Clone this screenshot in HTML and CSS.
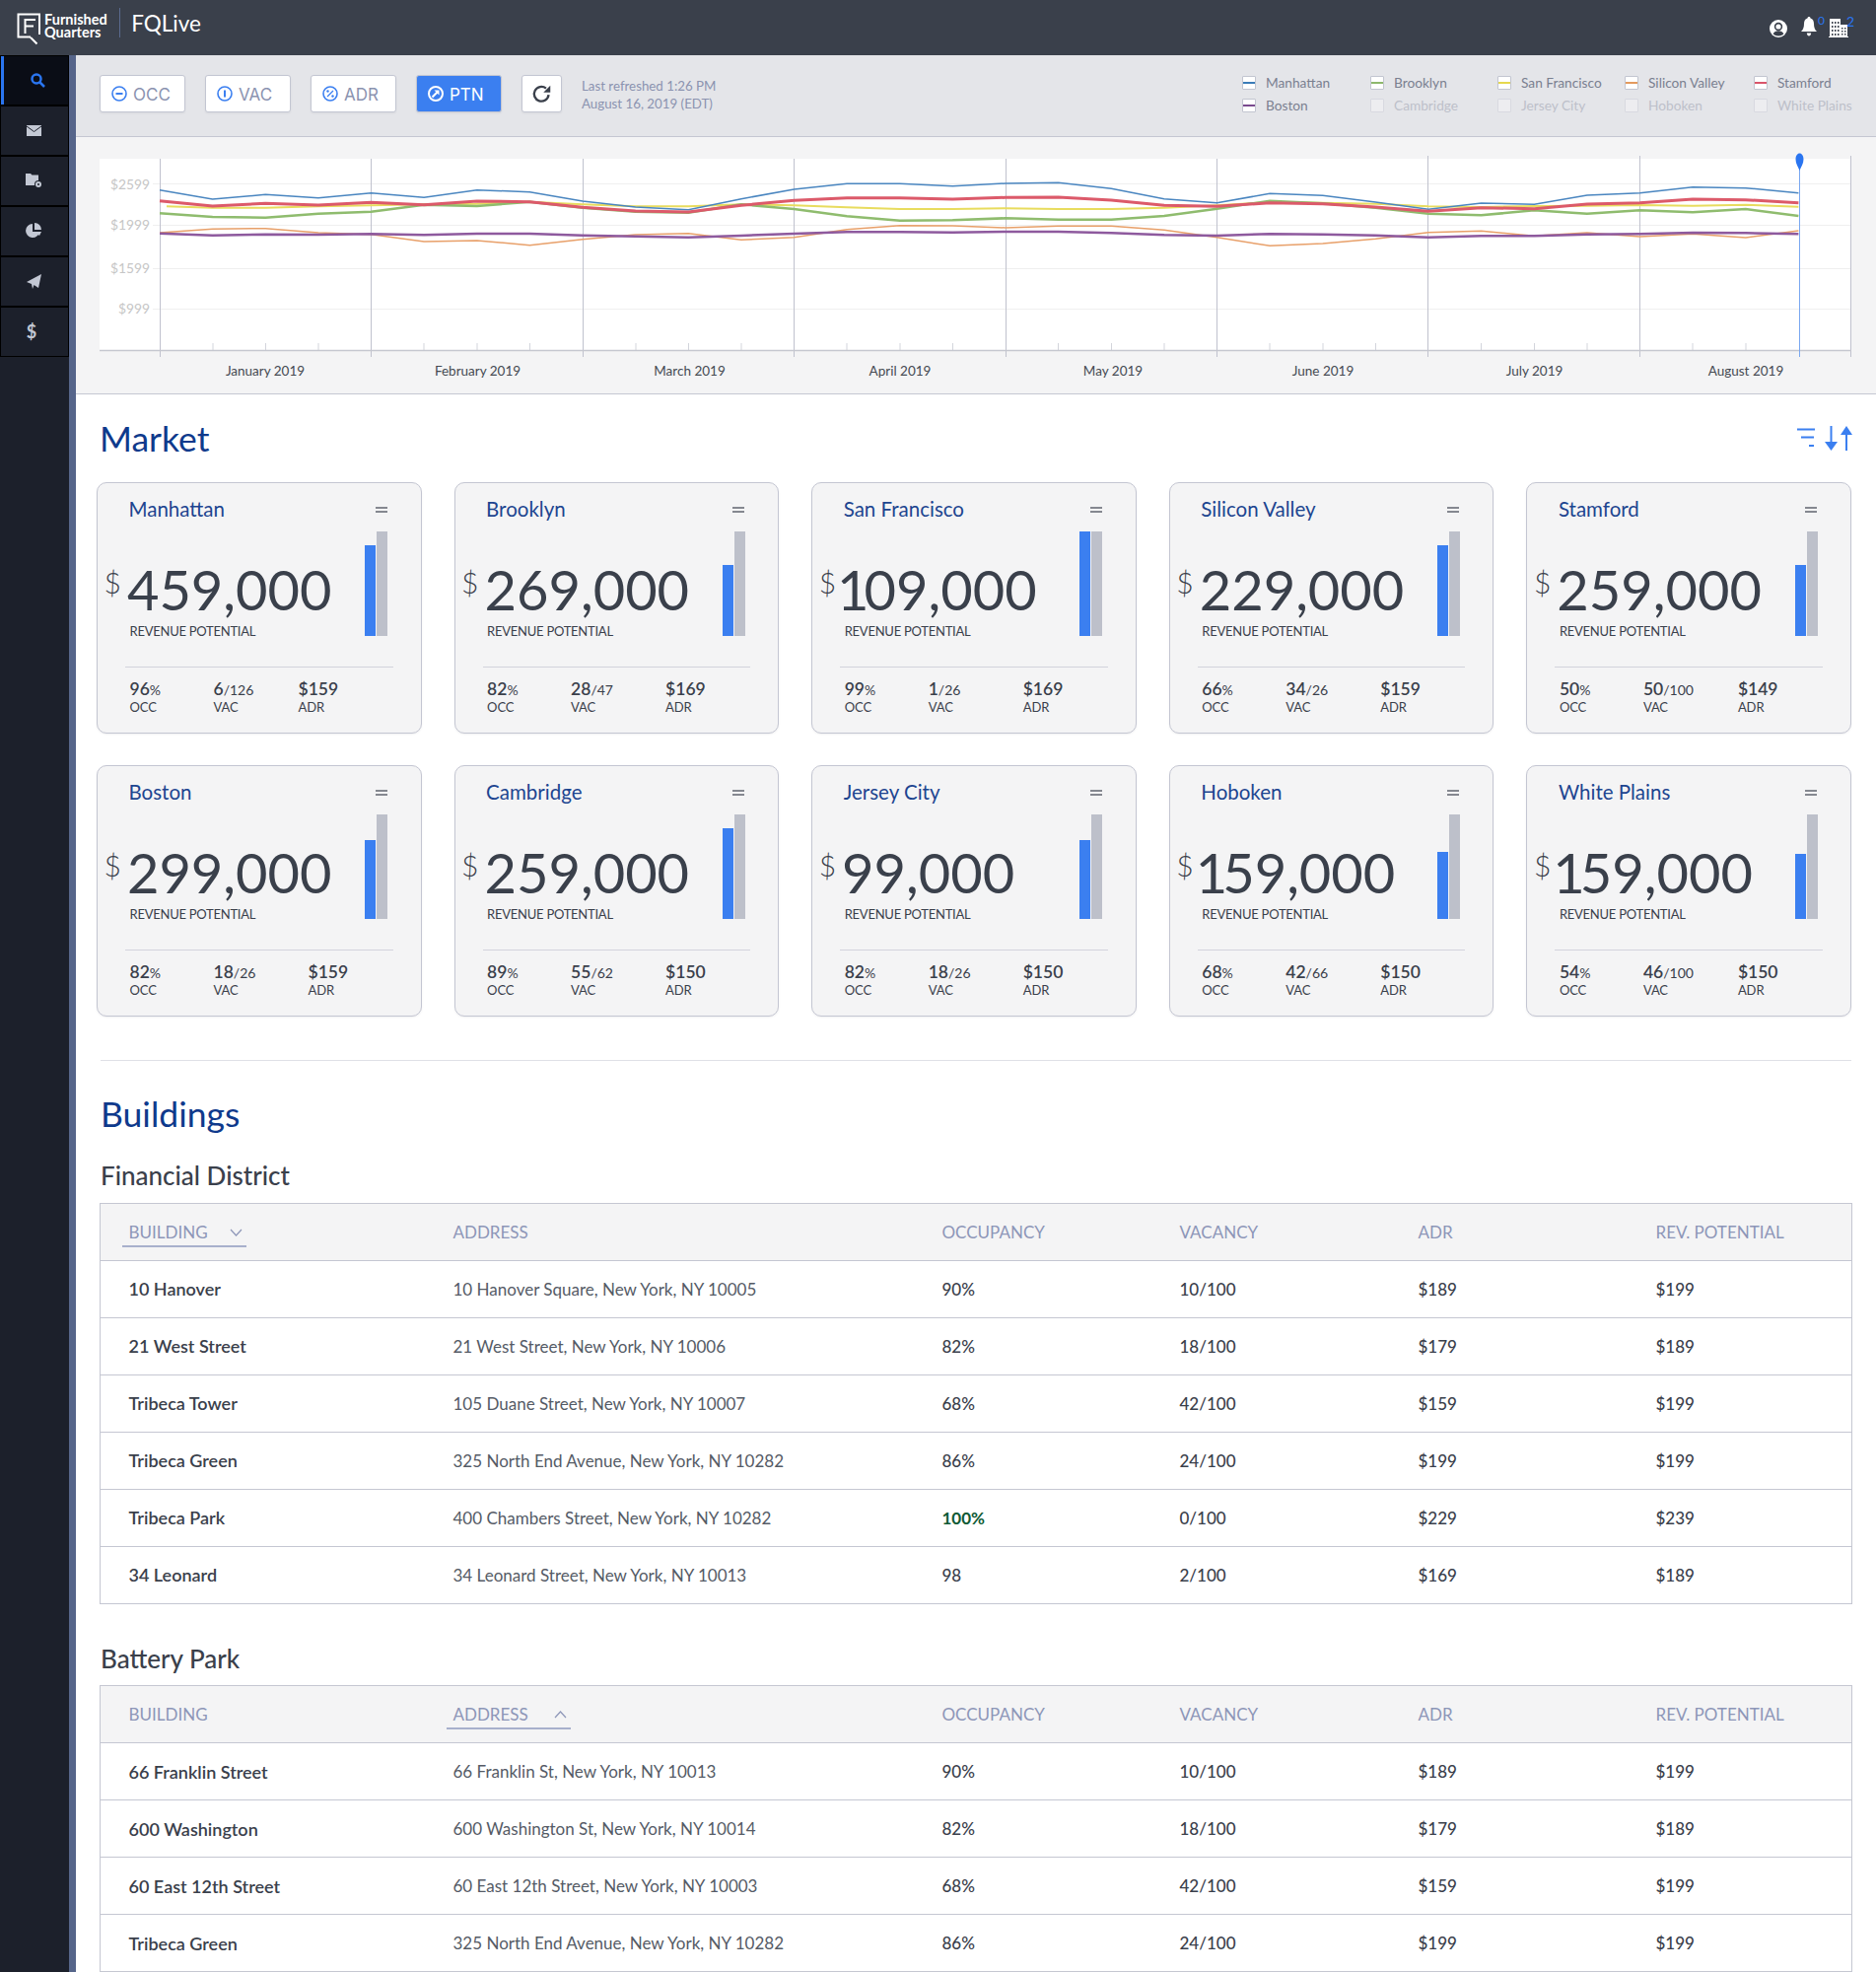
FILE: index.html
```html
<!DOCTYPE html>
<html lang="en">
<head>
<meta charset="utf-8">
<title>FQLive</title>
<link rel="stylesheet" href="styles.css">
</head>
<body>
<header class="topbar">
  <div class="brand">
    <svg class="logo-mark" width="24" height="34" viewBox="17 12 24 34"><path d="M40 35V14.500H18.500V37.500H31M25.500 34V20H36M25.500 26.500H34M31 38l6.500 6.500" fill="none" stroke="#fff" stroke-width="2"/></svg>
    <div class="logo-text"><span>Furnished</span><span>Quarters</span></div>
    <div class="brand-rule"></div>
    <div class="product">FQLive</div>
  </div>
  <div class="top-icons">
    <svg width="18" height="18" viewBox="0 0 18 18" class="ic-user"><circle cx="9" cy="9" r="9" fill="#fff"/><circle cx="9" cy="7" r="3.400" fill="#fff" stroke="#3a404b" stroke-width="1.600"/><path d="M3.600 14.600c1-2.600 3-3.400 5.400-3.400s4.400.8 5.400 3.400c-1.400 1.300-3.300 2-5.400 2s-4-.7-5.400-2z" fill="#3a404b"/></svg>
    <div class="badged"><svg width="16" height="20" viewBox="0 0 16 20"><path d="M8 0c1 0 1.500.7 1.500 1.500C12 2.200 13 4.500 13 7c0 3.500.8 6 3 8H0c2.200-2 3-4.500 3-8 0-2.500 1-4.800 3.500-5.500C6.500.7 7 0 8 0zM5.800 16.500h4.400C10 18.500 9 19.500 8 19.500s-2-1-2.200-3z" fill="#fff"/></svg><span class="badge">0</span></div>
    <div class="badged badged-b"><svg width="20" height="19" viewBox="0 0 20 19"><path d="M1 0h11v6h7v12h1v1H0v-1h1z" fill="#fff"/><path d="M3 3h1.500v2H3zM6 3h1.500v2H6zM9 3h1.500v2H9zM3 7h1.500v2H3zM6 7h1.500v2H6zM9 7h1.500v2H9zM3 11h1.500v2H3zM6 11h1.500v2H6zM9 11h1.500v2H9zM13 9h1.500v1.500H13zM16 9h1.500v1.500H16zM13 12h1.500v1.500H13zM16 12h1.500v1.500H16zM3 15h1.500v2H3zM6 15h1.500v2H6zM9 15h1.500v2H9zM13 15h1.500v1.500H13zM16 15h1.500v1.500H16z" fill="#3a404b"/></svg><span class="badge">2</span></div>
  </div>
</header>
<div class="shell">
  <nav class="sidebar">
    <a class="side-item side-active"><svg width="15" height="15" viewBox="0 0 15 15"><circle cx="6" cy="6" r="4.500" fill="none" stroke="#2a75f0" stroke-width="2.500"/><path d="M9.500 9.500l4.500 4.500" stroke="#2a75f0" stroke-width="2.500"/></svg></a>
    <a class="side-item"><svg width="15" height="11" viewBox="0 0 15 11"><path d="M0 0h15v11H0z" fill="#c3c8d4"/><path d="M0 1l7.500 5.500L15 1" fill="none" stroke="#1c202b" stroke-width="1"/></svg></a>
    <a class="side-item"><svg width="17" height="16" viewBox="0 0 17 16"><path d="M0 1h5l1.500 1.500H13V13H0z" fill="#c3c8d4"/><circle cx="13" cy="12" r="4" fill="#1c202b"/><circle cx="13" cy="12" r="3" fill="#c3c8d4"/><circle cx="13" cy="12" r="1" fill="#1c202b"/></svg></a>
    <a class="side-item"><svg width="16" height="16" viewBox="0 0 16 16"><path d="M7 1a7 7 0 1 0 7 8H7z" fill="#c3c8d4"/><path d="M9 0a7 7 0 0 1 7 7H9z" fill="#c3c8d4"/><path d="M9 9h7l-2 4z" fill="#c3c8d4"/></svg></a>
    <a class="side-item"><svg width="15" height="15" viewBox="0 0 15 15"><path d="M15 0L12 14 7.500 11 6 15 5 10 0 8z" fill="#c3c8d4"/></svg></a>
    <a class="side-item side-dollar">$</a>
  </nav>
  <main class="content">
    <section class="toolbar">
      <button class="tbtn"><svg width="16" height="16" viewBox="0 0 16 16"><circle cx="8" cy="8" r="7" fill="none" stroke="#3b7ff0" stroke-width="1.600"/><path d="M4.500 8h7" stroke="#3b7ff0" stroke-width="2"/></svg>OCC</button>
      <button class="tbtn"><svg width="16" height="16" viewBox="0 0 16 16"><circle cx="8" cy="8" r="7" fill="none" stroke="#3b7ff0" stroke-width="1.600"/><path d="M8 4.500v7" stroke="#3b7ff0" stroke-width="2"/></svg>VAC</button>
      <button class="tbtn"><svg width="16" height="16" viewBox="0 0 16 16"><circle cx="8" cy="8" r="7" fill="none" stroke="#3b7ff0" stroke-width="1.600"/><path d="M5 11l6-6" stroke="#3b7ff0" stroke-width="1.200"/><circle cx="5.500" cy="5.500" r="1.200" fill="#3b7ff0"/><circle cx="10.500" cy="10.500" r="1.200" fill="#3b7ff0"/></svg>ADR</button>
      <button class="tbtn tbtn-on"><svg width="16" height="16" viewBox="0 0 16 16"><circle cx="8" cy="8" r="7" fill="none" stroke="#fff" stroke-width="2"/><path d="M4.500 11.500L10 6" stroke="#fff" stroke-width="2.200"/><path d="M6.500 4.500H11.500V9.500z" fill="#fff"/></svg>PTN</button>
      <button class="tbtn tbtn-icon"><svg width="21" height="21" viewBox="0 0 18 18"><path d="M15 9.500A6.300 6.300 0 1 1 12.800 4" fill="none" stroke="#3a404b" stroke-width="2"/><path d="M16.500 1.500v6h-6z" fill="#3a404b"/></svg></button>
      <div class="refreshed">Last refreshed 1:26 PM<br>August 16, 2019 (EDT)</div>
      <div class="legend">
        <div class="leg"><span class="swatch s-blue"></span>Manhattan</div>
        <div class="leg"><span class="swatch s-green"></span>Brooklyn</div>
        <div class="leg"><span class="swatch s-yellow"></span>San Francisco</div>
        <div class="leg"><span class="swatch s-orange"></span>Silicon Valley</div>
        <div class="leg"><span class="swatch s-red"></span>Stamford</div>
        <div class="leg"><span class="swatch s-purple"></span>Boston</div>
        <div class="leg leg-off"><span class="swatch"></span>Cambridge</div>
        <div class="leg leg-off"><span class="swatch"></span>Jersey City</div>
        <div class="leg leg-off"><span class="swatch"></span>Hoboken</div>
        <div class="leg leg-off"><span class="swatch"></span>White Plains</div>
      </div>
    </section>
    <section class="chart">
      <svg class="chart-svg" width="1826" height="260" viewBox="77 139 1826 260">
        <rect x="101" y="161" width="1777" height="194" fill="#fff"/>
        <g class="grid"><path d="M155 186.500H1878M155 228.500H1878M155 272.500H1878M155 313.500H1878"/></g>
        <g class="ylab"><text x="152" y="192">$2599</text><text x="152" y="233">$1999</text><text x="152" y="277">$1599</text><text x="152" y="318">$999</text></g>
        <g class="vmajor"><path d="M162.500 161V362M376.500 161V362M591.500 161V362M805.500 161V362M1020.500 161V362M1234.500 161V362M1448.500 158V362M1663.500 158V362M1877.500 158V362"/></g>
        <g class="vminor"><path d="M216 348V355M269.500 348V355M323 348V355M430 348V355M484 348V355M537.500 348V355M645 348V355M698.500 348V355M752 348V355M859 348V355M913 348V355M966.500 348V355M1073.500 348V355M1127.500 348V355M1181 348V355M1288 348V355M1342 348V355M1395.500 348V355M1502.500 348V355M1556.500 348V355M1610 348V355M1717 348V355M1771 348V355"/></g>
        <path class="axis" d="M101 355.500H1878"/>
        <polyline class="ln ln-yellow" points="169,209.300 215.600,210.700 269.300,210.700 322.900,209.300 376.500,208.300 430.100,207.300 483.800,206.700 537.400,204.700 591,207.300 644.600,209.300 698.300,209.300 751.900,207.300 805.500,208.300 859.100,210.300 912.800,212 966.400,212 1020,211.300 1073.600,212 1127.300,212 1180.900,210.700 1234.500,208.300 1288.100,205 1341.800,205.700 1395.400,206.700 1449,209.300 1502.600,210 1556.300,209 1609.900,208.700 1663.500,208 1717.100,208.700 1770.800,207.700 1824.400,209.700"/>
        <polyline class="ln ln-blue" points="162,192.700 215.600,202 269.300,197.300 322.900,200.700 376.500,195.700 430.100,200.300 483.800,192.700 537.400,194.700 591,204 644.600,210 698.300,212.700 751.900,201.700 805.500,192 859.100,186.300 912.800,186.300 966.400,188.700 1020,186 1073.600,185.300 1127.300,191.300 1180.900,201.700 1234.500,205.700 1288.100,196.300 1341.800,198.300 1395.400,205 1449,212.300 1502.600,206 1556.300,207.300 1609.900,198 1663.500,195.700 1717.100,189.700 1770.800,190.700 1824.400,195.700"/>
        <polyline class="ln ln-green" points="162,216.300 215.600,220 269.300,220.700 322.900,216.700 376.500,214.700 430.100,207.700 483.800,209 537.400,204.700 591,210.700 644.600,214.700 698.300,215.700 751.900,207.300 805.500,212 859.100,219.300 912.800,223.700 966.400,223.300 1020,221.300 1073.600,222.700 1127.300,222.700 1180.900,219 1234.500,211.700 1288.100,203.700 1341.800,206.300 1395.400,210.700 1449,216.700 1502.600,218.300 1556.300,213.300 1609.900,216.700 1663.500,213.300 1717.100,215.300 1770.800,212 1824.400,219"/>
        <polyline class="ln ln-red" points="162,203.700 215.600,209 269.300,206.300 322.900,208 376.500,205.300 430.100,207.700 483.800,204 537.400,204.700 591,210.300 644.600,214 698.300,215 751.900,208.300 805.500,203.300 859.100,200.700 912.800,200.700 966.400,202 1020,200.300 1073.600,200 1127.300,203 1180.900,208.300 1234.500,209.300 1288.100,205.700 1341.800,206.700 1395.400,210 1449,214.300 1502.600,210.700 1556.300,211.700 1609.900,207 1663.500,205.700 1717.100,202 1770.800,202.700 1824.400,205.700"/>
        <polyline class="ln ln-orange" points="162,236 215.600,232.300 269.300,231.700 322.900,236 376.500,237.700 430.100,245 483.800,244 537.400,248.700 591,242.700 644.600,238 698.300,236.700 751.900,243.300 805.500,240.700 859.100,232.700 912.800,228.700 966.400,229 1020,231 1073.600,229.300 1127.300,229.300 1180.900,233.300 1234.500,240.700 1288.100,249.300 1341.800,247 1395.400,242.300 1449,235.700 1502.600,234.300 1556.300,239.300 1609.900,236 1663.500,240 1717.100,237.300 1770.800,241 1824.400,234"/>
        <polyline class="ln ln-purple" points="162,236.700 215.600,238.700 269.300,237.700 322.900,238 376.500,237.300 430.100,238.300 483.800,237 537.400,237 591,238.700 644.600,239.700 698.300,240.700 751.900,239 805.500,237 859.100,235.300 912.800,235.300 966.400,235.700 1020,235 1073.600,235 1127.300,236.300 1180.900,238.300 1234.500,239 1288.100,237.300 1341.800,237.700 1395.400,238.700 1449,240.700 1502.600,239.300 1556.300,239.300 1609.900,237.700 1663.500,237.300 1717.100,236 1770.800,236.300 1824.400,237.300"/>
        <path class="pin-line" d="M1825.500 168V362"/>
        <path class="pin" d="M1825.500 173c-1.500-4-4-7-4-11.500 0-3.500 1.800-6 4-6s4 2.500 4 6c0 4.500-2.500 7.500-4 11.500z"/>
        <g class="xlab"><text x="269" y="381">January 2019</text><text x="484.500" y="381">February 2019</text><text x="699.500" y="381">March 2019</text><text x="913" y="381">April 2019</text><text x="1129" y="381">May 2019</text><text x="1342" y="381">June 2019</text><text x="1556.500" y="381">July 2019</text><text x="1771" y="381">August 2019</text></g>
      </svg>
    </section>
    <section class="market">
      <div class="sec-head">
        <h1 class="h-sec">Market</h1>
        <div class="sort-tools">
          <svg class="filter-ic" width="18" height="19" viewBox="0 0 18 19"><path d="M0 1.500h18M4 9.500h13M12 18h5" stroke="#3b7ff0" stroke-width="2.200" fill="none"/></svg>
          <svg width="28" height="25" viewBox="0 0 28 25"><path d="M6.500 0v20" stroke="#3b7ff0" stroke-width="2"/><path d="M0 16h13l-6.500 9z" fill="#3b7ff0"/><path d="M22 25V5" stroke="#3b7ff0" stroke-width="2"/><path d="M16 9h12L22 0z" fill="#3b7ff0"/></svg>
        </div>
      </div>
      <div class="cards">
        <article class="card"><div class="card-head"><h3>Manhattan</h3><span class="menu"></span></div><div class="card-body"><div class="money"><div class="amount"><span class="cur">$</span><span class="num">459,000</span></div><div class="rp">REVENUE POTENTIAL</div></div><div class="bars"><i class="bar-b" style="height:92px"></i><i class="bar-g"></i></div></div><hr class="card-rule"><div class="stats stats-tight"><div><b>96<small>%</small></b><span>OCC</span></div><div><b>6<small>/126</small></b><span>VAC</span></div><div><b>$159</b><span>ADR</span></div></div></article>
        <article class="card"><div class="card-head"><h3>Brooklyn</h3><span class="menu"></span></div><div class="card-body"><div class="money"><div class="amount"><span class="cur">$</span><span class="num">269,000</span></div><div class="rp">REVENUE POTENTIAL</div></div><div class="bars"><i class="bar-b" style="height:72px"></i><i class="bar-g"></i></div></div><hr class="card-rule"><div class="stats"><div><b>82<small>%</small></b><span>OCC</span></div><div><b>28<small>/47</small></b><span>VAC</span></div><div><b>$169</b><span>ADR</span></div></div></article>
        <article class="card"><div class="card-head"><h3>San Francisco</h3><span class="menu"></span></div><div class="card-body"><div class="money"><div class="amount"><span class="cur">$</span><span class="num"><span class="one one-wide">1</span>09,000</span></div><div class="rp">REVENUE POTENTIAL</div></div><div class="bars"><i class="bar-b" style="height:106px"></i><i class="bar-g"></i></div></div><hr class="card-rule"><div class="stats"><div><b>99<small>%</small></b><span>OCC</span></div><div><b>1<small>/26</small></b><span>VAC</span></div><div><b>$169</b><span>ADR</span></div></div></article>
        <article class="card"><div class="card-head"><h3>Silicon Valley</h3><span class="menu"></span></div><div class="card-body"><div class="money"><div class="amount"><span class="cur">$</span><span class="num">229,000</span></div><div class="rp">REVENUE POTENTIAL</div></div><div class="bars"><i class="bar-b" style="height:92px"></i><i class="bar-g"></i></div></div><hr class="card-rule"><div class="stats"><div><b>66<small>%</small></b><span>OCC</span></div><div><b>34<small>/26</small></b><span>VAC</span></div><div><b>$159</b><span>ADR</span></div></div></article>
        <article class="card"><div class="card-head"><h3>Stamford</h3><span class="menu"></span></div><div class="card-body"><div class="money"><div class="amount"><span class="cur">$</span><span class="num">259,000</span></div><div class="rp">REVENUE POTENTIAL</div></div><div class="bars"><i class="bar-b" style="height:72px"></i><i class="bar-g"></i></div></div><hr class="card-rule"><div class="stats"><div><b>50<small>%</small></b><span>OCC</span></div><div><b>50<small>/100</small></b><span>VAC</span></div><div><b>$149</b><span>ADR</span></div></div></article>
        <article class="card"><div class="card-head"><h3>Boston</h3><span class="menu"></span></div><div class="card-body"><div class="money"><div class="amount"><span class="cur">$</span><span class="num">299,000</span></div><div class="rp">REVENUE POTENTIAL</div></div><div class="bars"><i class="bar-b" style="height:80px"></i><i class="bar-g"></i></div></div><hr class="card-rule"><div class="stats"><div><b>82<small>%</small></b><span>OCC</span></div><div><b>18<small>/26</small></b><span>VAC</span></div><div><b>$159</b><span>ADR</span></div></div></article>
        <article class="card"><div class="card-head"><h3>Cambridge</h3><span class="menu"></span></div><div class="card-body"><div class="money"><div class="amount"><span class="cur">$</span><span class="num">259,000</span></div><div class="rp">REVENUE POTENTIAL</div></div><div class="bars"><i class="bar-b" style="height:92px"></i><i class="bar-g"></i></div></div><hr class="card-rule"><div class="stats"><div><b>89<small>%</small></b><span>OCC</span></div><div><b>55<small>/62</small></b><span>VAC</span></div><div><b>$150</b><span>ADR</span></div></div></article>
        <article class="card"><div class="card-head"><h3>Jersey City</h3><span class="menu"></span></div><div class="card-body"><div class="money"><div class="amount"><span class="cur">$</span><span class="num">99,000</span></div><div class="rp">REVENUE POTENTIAL</div></div><div class="bars"><i class="bar-b" style="height:80px"></i><i class="bar-g"></i></div></div><hr class="card-rule"><div class="stats"><div><b>82<small>%</small></b><span>OCC</span></div><div><b>18<small>/26</small></b><span>VAC</span></div><div><b>$150</b><span>ADR</span></div></div></article>
        <article class="card"><div class="card-head"><h3>Hoboken</h3><span class="menu"></span></div><div class="card-body"><div class="money"><div class="amount"><span class="cur">$</span><span class="num"><span class="one">1</span>59,000</span></div><div class="rp">REVENUE POTENTIAL</div></div><div class="bars"><i class="bar-b" style="height:68px"></i><i class="bar-g"></i></div></div><hr class="card-rule"><div class="stats"><div><b>68<small>%</small></b><span>OCC</span></div><div><b>42<small>/66</small></b><span>VAC</span></div><div><b>$150</b><span>ADR</span></div></div></article>
        <article class="card"><div class="card-head"><h3>White Plains</h3><span class="menu"></span></div><div class="card-body"><div class="money"><div class="amount"><span class="cur">$</span><span class="num"><span class="one">1</span>59,000</span></div><div class="rp">REVENUE POTENTIAL</div></div><div class="bars"><i class="bar-b" style="height:66px"></i><i class="bar-g"></i></div></div><hr class="card-rule"><div class="stats"><div><b>54<small>%</small></b><span>OCC</span></div><div><b>46<small>/100</small></b><span>VAC</span></div><div><b>$150</b><span>ADR</span></div></div></article>
      </div>
    </section>
    <section class="buildings">
      <h1 class="h-sec h-bld">Buildings</h1>
      <h2 class="h-dist">Financial District</h2>
      <table class="btable">
        <colgroup><col class="c1"><col class="c2"><col class="c3"><col class="c4"><col class="c5"><col></colgroup>
        <thead><tr><th><span class="sorted">BUILDING<svg width="13" height="8" viewBox="0 0 13 8"><path d="M1 1l5.500 6L12 1" fill="none" stroke="#8d96b8" stroke-width="1.200"/></svg></span></th><th>ADDRESS</th><th>OCCUPANCY</th><th>VACANCY</th><th>ADR</th><th>REV. POTENTIAL</th></tr></thead>
        <tbody>
          <tr><td>10 Hanover</td><td>10 Hanover Square, New York, NY 10005</td><td>90%</td><td>10/100</td><td>$189</td><td>$199</td></tr>
          <tr><td>21 West Street</td><td>21 West Street, New York, NY 10006</td><td>82%</td><td>18/100</td><td>$179</td><td>$189</td></tr>
          <tr><td>Tribeca Tower</td><td>105 Duane Street, New York, NY 10007</td><td>68%</td><td>42/100</td><td>$159</td><td>$199</td></tr>
          <tr><td>Tribeca Green</td><td>325 North End Avenue, New York, NY 10282</td><td>86%</td><td>24/100</td><td>$199</td><td>$199</td></tr>
          <tr><td>Tribeca Park</td><td>400 Chambers Street, New York, NY 10282</td><td class="full">100%</td><td>0/100</td><td>$229</td><td>$239</td></tr>
          <tr><td>34 Leonard</td><td>34 Leonard Street, New York, NY 10013</td><td>98</td><td>2/100</td><td>$169</td><td>$189</td></tr>
        </tbody>
      </table>
      <h2 class="h-dist h-dist2">Battery Park</h2>
      <table class="btable">
        <colgroup><col class="c1"><col class="c2"><col class="c3"><col class="c4"><col class="c5"><col></colgroup>
        <thead><tr><th>BUILDING</th><th><span class="sorted">ADDRESS<svg width="13" height="8" viewBox="0 0 13 8"><path d="M1 7l5.500-6L12 7" fill="none" stroke="#8d96b8" stroke-width="1.200"/></svg></span></th><th>OCCUPANCY</th><th>VACANCY</th><th>ADR</th><th>REV. POTENTIAL</th></tr></thead>
        <tbody>
          <tr><td>66 Franklin Street</td><td>66 Franklin St, New York, NY 10013</td><td>90%</td><td>10/100</td><td>$189</td><td>$199</td></tr>
          <tr><td>600 Washington</td><td>600 Washington St, New York, NY 10014</td><td>82%</td><td>18/100</td><td>$179</td><td>$189</td></tr>
          <tr><td>60 East 12th Street</td><td>60 East 12th Street, New York, NY 10003</td><td>68%</td><td>42/100</td><td>$159</td><td>$199</td></tr>
          <tr><td>Tribeca Green</td><td>325 North End Avenue, New York, NY 10282</td><td>86%</td><td>24/100</td><td>$199</td><td>$199</td></tr>
        </tbody>
      </table>
    </section>
  </main>
</div>
</body>
</html>
```

FILE: styles.css
```css
* { box-sizing: border-box; }
html, body { margin: 0; padding: 0; height: 2000px; overflow: hidden; }
body { font-family: "Lato", "Liberation Sans", sans-serif; color: #3a404b; background: #fff; }

/* top bar */
.topbar { height: 56px; background: #3a404b; display: flex; align-items: flex-start; justify-content: space-between; }
.brand { display: flex; align-items: flex-start; padding-left: 17px; }
.logo-mark { display: block; margin-top: 12px; }
.logo-text { display: flex; flex-direction: column; margin: 13px 0 0 4px; color: #fff; font-size: 14.500px; font-weight: 700; line-height: 13px; }
.brand-rule { width: 1px; height: 30px; background: #5a6a8e; margin: 8px 0 0 12px; }
.product { margin: 9px 0 0 11.500px; color: #fff; font-size: 22.500px; line-height: 30px; }
.top-icons { display: flex; align-items: flex-start; padding: 17px 23px 0 0; height: 56px; }
.ic-user { margin-top: 3px; }
.badged { position: relative; margin-left: 14px; }
.badged-b { margin-left: 12px; margin-top: 2px; margin-right: 5px; }
.badge { position: absolute; left: 17px; top: -3px; color: #2a75f0; font-size: 12px; line-height: 14px; }
.badged-b .badge { left: 18px; top: -4px; font-size: 14px; }

/* layout */
.shell { display: flex; height: 1944px; }
.sidebar { width: 77px; flex: none; background: #1c202b; border-right: 7px solid #56658a; }
.side-item { display: flex; width: 70px; height: 51px; align-items: center; justify-content: center; background: #1c202b; border: 1.5px solid #000; padding: 0 2px 1px 0; }
.side-active { background: #0a0d16; box-shadow: inset 3px 0 0 #2a75f0; padding: 0 0 0 7px; }
.side-dollar { color: #c3c8d4; font-weight: 700; font-size: 18px; padding: 0 6px 2px 0; }
.content { flex: 1; min-width: 0; }

/* toolbar */
.toolbar { height: 83px; background: #e4e5e9; border-bottom: 1.5px solid #c5c7d2; padding: 20px 25px 0 24px; display: flex; align-items: flex-start; }
.tbtn { width: 86.500px; height: 38px; margin-right: 20.500px; background: #fff; border: 1px solid #c3c6d2; border-radius: 3px; display: flex; align-items: center; padding: 1px 0 0 11px; gap: 6px; font-family: "Inter", sans-serif; font-size: 17px; color: #8b93b0; box-shadow: 0 1px 2px rgba(60,64,80,.08); }
.tbtn svg { margin-top: -1px; }
.tbtn-on { background: #3b7ff0; color: #fff; }
.tbtn-icon { width: 40.500px; margin-right: 20.500px; padding: 1px 0 0 8.500px; }
.refreshed { font-size: 13.300px; line-height: 17.500px; color: #8b93b0; padding-top: 3px; }
.legend { margin-left: auto; display: grid; grid-template-columns: 130px 129px 129px 131px 99px; grid-auto-rows: 14px; row-gap: 9px; padding-top: 1px; }
.leg { display: flex; align-items: center; font-size: 13.700px; line-height: 14px; color: #7a8090; white-space: nowrap; }
.leg-off { color: #bdc0ca; }
.swatch { position: relative; width: 14px; height: 14px; margin-right: 10px; background: #fff; border: 1px solid #c2c5d0; border-radius: 1px; flex: none; }
.leg-off .swatch { background: #ededf0; border-color: #d8d9e0; }
.swatch::after { content: ""; position: absolute; left: 0; right: 0; top: 4.500px; height: 2.500px; }
.s-blue::after { background: #3b7cb8; }
.s-green::after { background: #8db86c; }
.s-yellow::after { background: #e6d84e; }
.s-orange::after { background: #e39a5e; }
.s-red::after { background: #d9556a; }
.s-purple::after { background: #7a4a8e; }

/* chart */
.chart { height: 261px; background: #f4f4f5; border-bottom: 1.5px solid #c5c7d2; }
.chart-svg { display: block; }
.grid path { stroke: #efefef; stroke-width: 1; fill: none; }
.ylab text { text-anchor: end; font-size: 13.800px; fill: #c6c6c6; }
.xlab text { text-anchor: middle; font-size: 13.500px; fill: #454a52; }
.vmajor path { stroke: #c0c2ce; stroke-width: 1; fill: none; }
.vminor path { stroke: #d3d5dc; stroke-width: 1; fill: none; }
.axis { stroke: #c5c7cf; stroke-width: 1.500; fill: none; }
.ln { fill: none; }
.ln-blue { stroke: #4a86c0; stroke-width: 1.500; }
.ln-red { stroke: #dc5a6a; stroke-width: 3; }
.ln-yellow { stroke: #e8dc5e; stroke-width: 2; }
.ln-green { stroke: #8fbc6e; stroke-width: 2.500; }
.ln-orange { stroke: #e8a06a; stroke-width: 1.500; }
.ln-purple { stroke: #8e5a9e; stroke-width: 2.500; }
.pin-line { stroke: #7aa8f0; stroke-width: 1; fill: none; }
.pin { fill: #2a75f0; }

/* market */
.market { padding: 25px 25px 0 21px; }
.sec-head { display: flex; justify-content: space-between; align-items: flex-start; height: 64px; padding-left: 3px; }
.h-sec { margin: 0; font-size: 35.500px; line-height: 40px; font-weight: 400; color: #0f3a8c; }
.sort-tools { display: flex; align-items: flex-start; gap: 10px; padding-top: 7px; margin-right: -1px; }
.filter-ic { margin-top: 2px; }
.cards { display: grid; grid-template-columns: repeat(5, 1fr); column-gap: 33px; row-gap: 32px; }
.card { height: 255px; background: #f4f4f5; border: 1.5px solid #c4c6d2; border-radius: 10px; box-shadow: 0 1px 2px rgba(60,64,80,.08); }
.card-head { height: 48.500px; padding: 11.500px 34px 0 31.500px; display: flex; justify-content: space-between; align-items: flex-start; }
.card-head h3 { margin: 0; font-size: 20.500px; line-height: 28px; font-weight: 400; color: #1d4590; }
.menu { width: 12px; height: 6px; margin-top: 12px; border-top: 2px solid #858890; border-bottom: 2px solid #858890; }
.card-body { height: 106px; padding: 0 33.500px 0 6.500px; display: flex; justify-content: space-between; align-items: flex-end; }
.money { align-self: flex-start; padding-top: 31px; }
.amount { display: flex; align-items: flex-start; }
.cur { font-size: 30px; line-height: 30px; font-weight: 300; margin: 5px 6px 0 0; }
.num { font-size: 56px; line-height: 54px; white-space: nowrap; margin-top: 1.500px; }
.one { letter-spacing: -5px; margin-left: -4px; }
.one-wide { margin-left: -5px; }
.rp { font-size: 13px; line-height: 18px; margin: 5.500px 0 0 26px; white-space: nowrap; letter-spacing: -.25px; }
.bars { display: flex; align-items: flex-end; gap: 1px; }
.bar-b { display: block; width: 11px; background: #3b7ff0; }
.bar-g { display: block; width: 11px; height: 106px; background: #bdc0ca; }
.card-rule { border: 0; height: 1px; background: #d2d3dc; margin: 31px 28px 0 28px; }
.stats { display: grid; grid-template-columns: 85px 96px auto; padding: 12px 0 0 32.500px; }
.stats-tight { grid-template-columns: 85px 86px auto; }
.stats b { display: block; height: 20px; font-size: 17.500px; line-height: 20px; font-weight: 600; }
.stats small { font-size: 14px; font-weight: 400; line-height: 0; }
.stats span { display: block; font-size: 13px; line-height: 16px; letter-spacing: -.1px; }

/* buildings */
.buildings { margin: 44px 0 0 0; padding: 0 25px 0 25px; }
.buildings::before { content: ""; display: block; height: 1px; background: #dfe0e6; margin-bottom: 33.500px; }
.h-dist { margin: 27.500px 0 12.500px; font-size: 26px; line-height: 30px; font-weight: 500; color: #3a404b; }
.h-dist2 { margin-top: 40px; }
.btable { width: 1778px; margin-left: -1.500px; border-collapse: collapse; table-layout: fixed; border: 1.5px solid #c5c7d2; }
.c1 { width: 358.500px; }
.c2 { width: 496px; }
.c3 { width: 241px; }
.c4 { width: 242px; }
.c5 { width: 241px; }
.btable th { height: 58px; background: #f4f4f5; text-align: left; font-size: 17px; font-weight: 400; color: #8d96b8; padding: 0; }
.btable th:first-child, .btable td:first-child { padding-left: 29px; }
.btable td { height: 58px; font-size: 17px; padding: 0; border-top: 1.5px solid #c5c7d2; font-weight: 500; color: #3a404b; }
.btable td:first-child { font-size: 18px; font-weight: 600; }
.btable td:nth-child(2) { font-weight: 400; color: #555b66; }
.btable .full { color: #0f5a35; font-weight: 700; }
.sorted { display: inline-flex; justify-content: space-between; align-items: center; width: 126px; padding: 0 4px 3px 7px; margin: 0 0 -5px -7px; border-bottom: 2px solid #a8b0cc; line-height: 20px; }
```
